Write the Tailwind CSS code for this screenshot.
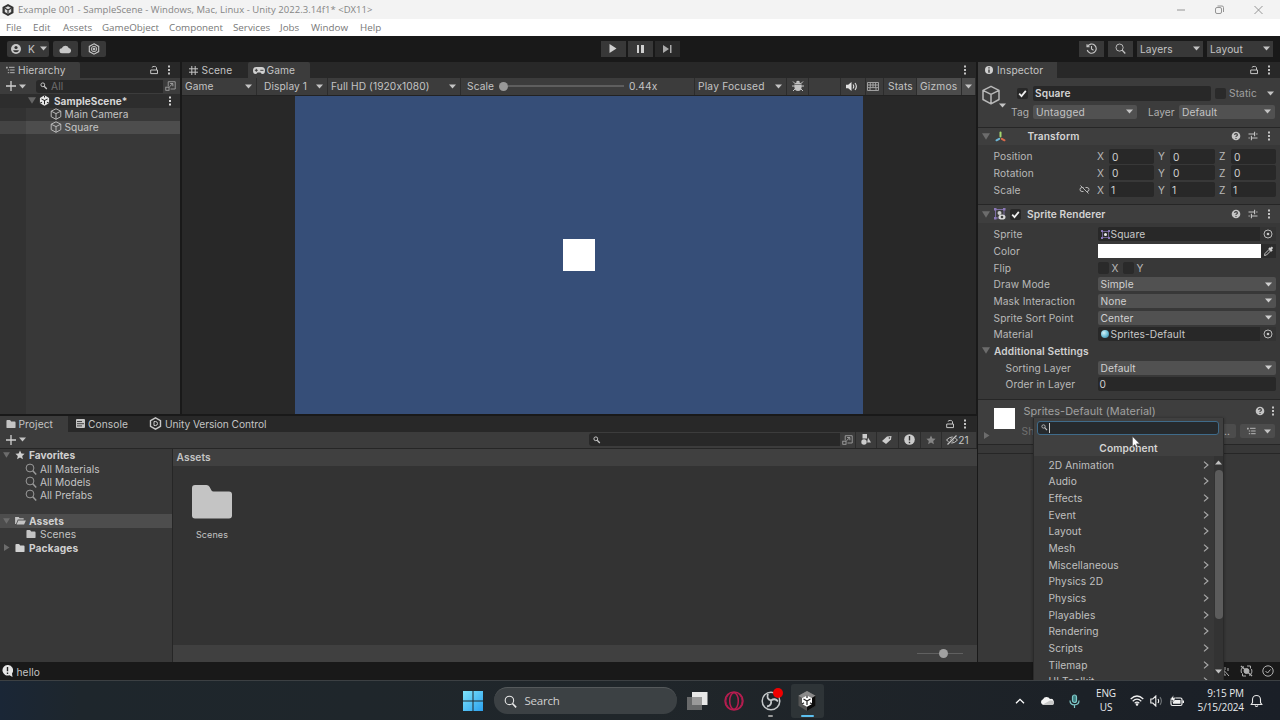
<!DOCTYPE html>
<html lang="en">
<head>
<meta charset="utf-8">
<title>Example 001 - SampleScene - Unity</title>
<script src="https://cdn.jsdelivr.net/npm/@tailwindcss/browser@4"></script>
</head>
<body class="w-[1280px] h-[720px] overflow-hidden bg-[#191919] font-['Inter',sans-serif] text-[10.2px] leading-[14px] tracking-[0.1px] text-[#c4c4c4] whitespace-nowrap select-none">
<svg class="hidden">
  <symbol id="dn" viewBox="0 0 8 5"><path d="M0 .3h8L4 4.9z" fill="currentColor"/></symbol>
  <symbol id="fold" viewBox="0 0 8 7"><path d="M0 .3h8L4 6.800z" fill="currentColor"/></symbol>
  <symbol id="dots" viewBox="0 0 4 12"><g fill="currentColor"><rect x="1" y="1.500" width="2" height="2"/><rect x="1" y="5" width="2" height="2"/><rect x="1" y="8.500" width="2" height="2"/></g></symbol>
  <symbol id="lock" viewBox="0 0 10 10"><path d="M1.700 5h6.800v3.600H1.700zM3 2.600C3 1 7.500 1 7.500 2.800V5" fill="none" stroke="currentColor" stroke-width="1"/></symbol>
  <symbol id="cube" viewBox="0 0 12 12"><path d="M6 .8l4.800 2.400v5.500L6 11.300 1.200 8.700V3.200zM1.200 3.200L6 5.600l4.800-2.400M6 5.600v5.700" fill="none" stroke="currentColor" stroke-width=".9" stroke-linejoin="round"/></symbol>
  <symbol id="mag" viewBox="0 0 12 12"><circle cx="5" cy="5" r="3.900" fill="none" stroke="currentColor"/><path d="M7.800 7.800l3.400 3.600" stroke="currentColor" stroke-width="1.500"/></symbol>
  <symbol id="smag" viewBox="0 0 9 8"><circle cx="2.800" cy="2.800" r="1.900" fill="none" stroke="currentColor"/><path d="M4.200 4.200l2.600 2.800" stroke="currentColor" stroke-width="1.300"/></symbol>
  <symbol id="folder" viewBox="0 0 12 11"><path d="M1 2q0-1 1-1h2.600q.6 0 .9.700l.6 1.100H10q1 0 1 1V9q0 1-1 1H2Q1 10 1 9z" fill="currentColor"/></symbol>
  <symbol id="help" viewBox="0 0 10 10"><circle cx="5" cy="5" r="4.300" fill="currentColor"/><path d="M3.600 4q0-1.400 1.400-1.400T6.400 4q0 .7-.8 1.100T5 6M5 6.900v1" fill="none" stroke="#3c3c3c" stroke-width="1.100"/></symbol>
  <symbol id="preset" viewBox="0 0 10 10"><path d="M.5 3h5.700M8.200 3h1.300M6.600 .8v4.400M.5 7h1.300M3.800 7h5.700M3.400 4.800v4.400" stroke="currentColor" stroke-width="1.100"/></symbol>
  <symbol id="target" viewBox="0 0 10 10"><circle cx="5" cy="5" r="4" fill="none" stroke="currentColor" stroke-width=".9"/><circle cx="5" cy="5" r="1.300" fill="currentColor"/></symbol>
  <symbol id="check" viewBox="0 0 10 10"><path d="M2 5.200l2.100 2.200L8 2.600" fill="none" stroke="#eee" stroke-width="1.600"/></symbol>
  <symbol id="unity" viewBox="0 0 12 12"><path d="M6 .3l5 2.900v5.700l-5 2.800-5-2.800V3.200z" fill="currentColor"/><path d="M6 6.100V10M6 6.100L2.700 4.200M6 6.100l3.300-1.900M6 .5v2.200M1.300 9l2-1.200M10.700 9l-2-1.200" stroke="#222" stroke-width="1.100"/></symbol>
  <symbol id="expand" viewBox="0 0 12 11"><path d="M3.500 6V.8h7.700v8H6" fill="none" stroke="currentColor" stroke-width=".9"/><rect x=".8" y="6.800" width="3.600" height="3.400" fill="none" stroke="currentColor" stroke-width=".9"/><path d="M4.800 6.400l3.400-3.200M5.600 2.800h3v3" fill="none" stroke="currentColor"/></symbol>
  <symbol id="list" viewBox="0 0 10 8"><path d="M0 1h2M3.400 1H9.500M2 4h1.600M4.600 4h5M2 7h1.600M4.600 7h5M1 1.200V2.600" stroke="currentColor" stroke-width="1"/></symbol>
  <symbol id="chev" viewBox="0 0 6 8"><path d="M1 .6l3.900 3.400L1 7.400" fill="none" stroke="currentColor" stroke-width="1.200"/></symbol>
  <symbol id="star" viewBox="0 0 10 10"><path d="M5 .4l1.400 3 3.200.3-2.400 2.200.7 3.300L5 7.500 2.100 9.200l.7-3.300L.4 3.700l3.200-.3z" fill="currentColor"/></symbol>
</svg>

<div class="flex flex-col h-full">
  <!-- title bar -->
  <header class="h-[19px] bg-[#f3f3f3] flex items-center text-[#858585] font-['Open_Sans',sans-serif] text-[9.500px] tracking-[0.04px]">
    <svg class="w-3 h-3 ml-0.5 shrink-0" viewBox="0 0 12 12"><path d="M6 0l5.500 3v6L6 12 .5 9V3z" fill="#333"/><path d="M6 2.200l3.200 1.900v3.800L6 9.800 2.800 7.900V4.100z" fill="#ddd"/><path d="M6 6v3.600M6 6L3 4.300M6 6l3-1.700" stroke="#333" stroke-width="1.200"/></svg>
    <span class="ml-1 flex-1">Example 001 - SampleScene - Windows, Mac, Linux - Unity 2022.3.14f1* &lt;DX11&gt;</span>
    <svg class="w-[90px] h-[10px] mr-[15px] shrink-0" viewBox="0 0 90 10" fill="none" stroke="#8a8a8a" stroke-width=".9"><path d="M2 5h8M79.500 1l8 8M87.500 1l-8 8"/><rect x="40.500" y="2.500" width="6" height="6" rx="1.500"/><path d="M42.500 1h4.500q1.500 0 1.500 1.500V7"/></svg>
  </header>
  <nav class="h-[17px] bg-white flex items-center text-[#777] font-['Open_Sans',sans-serif] text-[9.800px] tracking-[0px] pt-px">
    <span class="ml-1.5 w-[27px]">File</span><span class="w-[30px]">Edit</span><span class="w-[39px]">Assets</span><span class="w-[67px]">GameObject</span><span class="w-16">Component</span><span class="w-[47px]">Services</span><span class="w-[31px]">Jobs</span><span class="w-[49px]">Window</span><span>Help</span>
  </nav>
  <!-- main toolbar -->
  <div class="h-[26px] bg-[#191919] flex items-center pb-px">
    <div class="ml-[7px] w-[42px] h-4 bg-[#383838] rounded-[2px] flex items-center">
      <svg class="w-[10px] h-[10px] ml-1" viewBox="0 0 10 10"><circle cx="5" cy="5" r="5" fill="#c8c8c8"/><circle cx="5" cy="3.500" r="1.600" fill="#333"/><path d="M2 6.300h6q-.6 2-3 2t-3-2" fill="#333"/></svg>
      <span class="ml-[7px]">K</span><svg class="w-[7px] h-[5px] ml-[5px]"><use href="#dn"/></svg>
    </div>
    <div class="ml-1 w-[25px] h-4 bg-[#383838] rounded-[2px] flex items-center justify-center"><svg class="w-[13px] h-[10px]" viewBox="0 0 12 9"><path d="M2.800 8.500a2.300 2.300 0 0 1-.2-4.600A3.400 3.400 0 0 1 9 3.600a2.500 2.500 0 0 1 .3 4.900z" fill="#c8c8c8"/></svg></div>
    <div class="ml-[3px] w-[25px] h-4 bg-[#383838] rounded-[2px] flex items-center justify-center"><svg class="w-[12px] h-[12px]" viewBox="0 0 12 12" fill="none" stroke="#c8c8c8"><path d="M6 .8l4.700 2.600v5.200L6 11.200 1.300 8.600V3.400z" stroke-width="1.100"/><circle cx="6" cy="6" r="2.700" stroke-width=".9"/><circle cx="6" cy="6" r="1" fill="#c8c8c8"/></svg></div>
    <div class="ml-[494.500px] flex gap-0.5">
      <div class="w-[25px] h-4 bg-[#383838] flex items-center justify-center"><svg class="w-2 h-[9px]" viewBox="0 0 8 9"><path d="M.5 0l7 4.500-7 4.500z" fill="#d0d0d0"/></svg></div>
      <div class="w-[25px] h-4 bg-[#383838] flex items-center justify-center gap-0.5"><i class="w-[2.500px] h-2 bg-[#d0d0d0]"></i><i class="w-[2.500px] h-2 bg-[#d0d0d0]"></i></div>
      <div class="w-[25px] h-4 bg-[#2a2a2a] flex items-center justify-center"><svg class="w-[9px] h-2" viewBox="0 0 9 8"><path d="M0 0l6 4-6 4zM7 0h1.500v8H7z" fill="#aaa"/></svg></div>
    </div>
    <div class="ml-auto mr-[7px] flex gap-1 pl-0">
      <div class="w-[25px] h-4 bg-[#383838] flex items-center justify-center"><svg class="w-[11px] h-[11px]" viewBox="0 0 11 11" fill="none" stroke="#c8c8c8" stroke-width="1.100"><path d="M1.500 3.600A4.600 4.600 0 1 1 1.200 7M1 1.200v2.600h2.600M5.500 3v3l2 1.200"/></svg></div>
      <div class="w-[25px] h-4 bg-[#383838] flex items-center justify-center"><svg class="w-[11px] h-[11px]"><use href="#mag"/></svg></div>
      <div class="w-[66px] h-4 bg-[#383838] flex items-center justify-between pl-[3px] pr-[3px]"><span>Layers</span><svg class="w-[7px] h-[5px]"><use href="#dn"/></svg></div>
      <div class="w-[66px] h-4 bg-[#383838] flex items-center justify-between pl-[3px] pr-[3px]"><span>Layout</span><svg class="w-[7px] h-[5px]"><use href="#dn"/></svg></div>
    </div>
  </div>

  <div class="flex h-[600px]">
    <div class="w-[977px] flex flex-col">
      <div class="flex h-[352px]">
        <!-- hierarchy -->
        <section class="w-[180px] bg-[#383838] flex flex-col">
          <div class="h-4 bg-[#282828] flex items-center">
            <div class="w-20 h-full bg-[#3c3c3c] flex items-center rounded-tr-[2px]"><svg class="ml-1.5 w-[9px] h-[8px]"><use href="#list"/></svg><span class="ml-[3px]">Hierarchy</span></div>
            <svg class="w-[10px] h-[10px] ml-[69px]"><use href="#lock"/></svg><svg class="w-1 h-3 ml-2"><use href="#dots"/></svg>
          </div>
          <div class="h-4 bg-[#3c3c3c] flex items-center">
            <svg class="ml-1.5 w-[10px] h-[10px] shrink-0" viewBox="0 0 10 10"><path d="M5 0v10M0 5h10" stroke="#d0d0d0" stroke-width="1.300"/></svg><svg class="ml-[3px] w-[7px] h-[5px] shrink-0"><use href="#dn"/></svg>
            <div class="ml-[10px] w-[127px] h-[13px] shrink-0 bg-[#282828] rounded-l-[3px] flex items-center"><svg class="ml-1 w-[9px] h-2"><use href="#smag"/></svg><span class="ml-0.5 text-[#6e6e6e]">All</span></div>
            <svg class="ml-[2px] w-[11px] h-[10px] text-[#aaa] shrink-0"><use href="#expand"/></svg>
          </div>
          <div class="h-[13.500px] bg-[#2d2d2d] flex items-center font-bold text-[#d6d6d6]">
            <svg class="ml-7 w-2 h-[7px] text-[#666]"><use href="#fold"/></svg><svg class="ml-[3px] w-[11px] h-[11px] text-[#e8e8e8]"><use href="#unity"/></svg><span class="ml-1 w-[114px] text-[10px] tracking-[0.06px]">SampleScene*</span><svg class="w-1 h-3"><use href="#dots"/></svg>
          </div>
          <div class="flex-1 flex flex-col bg-[linear-gradient(to_right,#323232_26px,#383838_26px)]">
            <div class="h-[13.200px] flex items-center"><svg class="ml-[50px] w-3 h-3"><use href="#cube"/></svg><span class="ml-[2.500px] tracking-[0px]">Main Camera</span></div>
            <div class="h-[13.500px] flex items-center bg-[linear-gradient(to_right,#444_26px,#4d4d4d_26px)]"><svg class="ml-[50px] w-3 h-3"><use href="#cube"/></svg><span class="ml-[2.500px] tracking-[0px]">Square</span></div>
          </div>
        </section>
        <!-- game view -->
        <section class="ml-0.5 w-[794px] bg-[#282828] flex flex-col">
          <div class="h-4 flex items-center">
            <svg class="ml-[7px] w-[9px] h-[9px]" viewBox="0 0 9 9"><path d="M2.800 0v9M6.200 0v9M0 2.800h9M0 6.200h9" stroke="#c4c4c4"/></svg><span class="ml-[3.500px] w-[46px]">Scene</span>
            <div class="w-[62px] h-full bg-[#3c3c3c] flex items-center rounded-t-[2px]"><svg class="ml-[5px] w-3 h-[7px]" viewBox="0 0 12 7"><path d="M3.300 0h5.400Q12 0 12 3.500T9.500 7Q8.500 7 7.500 5.500h-3Q3.500 7 2.500 7 0 7 0 3.500T3.300 0" fill="#d0d0d0"/><path d="M3.300 1.800v3M1.800 3.300h3M7.300 3.300h3.200" stroke="#3c3c3c"/></svg><span class="ml-0.5">Game</span></div>
            <svg class="w-1 h-3 ml-auto mr-[9px]"><use href="#dots"/></svg>
          </div>
          <div class="h-[17.500px] bg-[#3c3c3c] border-b border-[#222] flex items-center *:h-full *:flex *:items-center *:border-r *:border-[#2c2c2c]">
            <div class="w-[75px] pl-[3px] justify-between pr-1"><span>Game</span><svg class="w-[7px] h-[5px]"><use href="#dn"/></svg></div>
            <div class="w-[71px] pl-[7px] justify-between pr-1"><span>Display 1</span><svg class="w-[7px] h-[5px]"><use href="#dn"/></svg></div>
            <div class="w-[133px] pl-[3px] justify-between pr-1"><span>Full HD (1920x1080)</span><svg class="w-[7px] h-[5px]"><use href="#dn"/></svg></div>
            <div class="w-[234px] pl-1.5"><span class="w-[30px]">Scale</span><i class="ml-0.5 w-[9px] h-[9px] rounded-full bg-[#999]"></i><i class="w-[116px] h-0.5 bg-[#5e5e5e]"></i><span class="ml-[5px]">0.44x</span></div>
            <div class="w-[92px] pl-[3px] justify-between pr-1"><span class="tracking-[0.2px]">Play Focused</span><svg class="w-[7px] h-[5px]"><use href="#dn"/></svg></div>
            <div class="w-[22px] justify-center"><svg class="w-[12px] h-[12px]" viewBox="0 0 12 12"><path d="M1 1.500l3 3M11 1.500l-3 3M0 6h12M1 11l3-3M11 11L8 8" stroke="#c4c4c4"/><ellipse cx="6" cy="6.500" rx="3.600" ry="4.500" fill="#c4c4c4"/><path d="M3 4.500h6" stroke="#555" stroke-width=".7"/><path d="M4 2q2-2.500 4 0" fill="#c4c4c4"/></svg></div>
            <div class="w-8"></div>
            <div class="w-[25px] pl-[5px]"><svg class="w-3 h-[9px]" viewBox="0 0 12 9"><path d="M0 2.700h2.200L5.500 0v9L2.200 6.300H0z" fill="#e0e0e0"/><path d="M7 2.500q1.500 2 0 4M9 1q2.700 3.500 0 7" fill="none" stroke="#e0e0e0" stroke-width="1.100"/></svg></div>
            <div class="w-[18px] pr-1 justify-center"><svg class="w-3 h-[9px] shrink-0" viewBox="0 0 12 9"><path d="M.5.5h11v8H.5zM1 3h10M1 5.600h10M3.300 1v4.500M6 1v4.500M8.600 1v4.500M3 6v2.500M9 6v2.500" fill="none" stroke="#aaa" stroke-width=".9"/></svg></div>
            <div class="w-[33px] pl-1"><span>Stats</span></div>
            <div class="w-[45px] pl-[3px] bg-[#4c4c4c]"><span class="tracking-[0.2px]">Gizmos</span></div>
            <div class="flex-1 bg-[#4c4c4c] justify-center"><svg class="w-[7px] h-[5px]"><use href="#dn"/></svg></div>
          </div>
          <div class="flex-1 flex pl-[113px]"><div class="w-[568px] h-full bg-[#364e78] flex items-center justify-center"><div class="w-8 h-8 bg-white"></div></div></div>
        </section>
      </div>
      <!-- project -->
      <section class="mt-[1.500px] flex-1 flex flex-col bg-[#333]">
        <div class="h-4 bg-[#282828] flex items-center">
          <div class="w-[68px] h-full bg-[#3c3c3c] flex items-center"><svg class="ml-[5px] w-3 h-[10px]"><use href="#folder"/></svg><span class="ml-[1.500px]">Project</span></div>
          <svg class="ml-2 w-[9px] h-[9px]" viewBox="0 0 9 9"><rect width="9" height="9" rx="1" fill="#c4c4c4"/><path d="M1 2.500h5M1 4.700h7M1 6.900h5" stroke="#333" stroke-width=".9"/></svg><span class="ml-[3px] w-[61px]">Console</span>
          <svg class="w-[13px] h-[13px]" viewBox="0 0 13 13" fill="none" stroke="#c8c8c8"><path d="M6.500.8l5 2.900v5.600l-5 2.900-5-2.900V3.700z" stroke-width="1.400"/><path d="M5 4.500h1.500q2 0 2 2t-2 2H5z"/></svg><span class="ml-[3px] tracking-[-0.050px]">Unity Version Control</span>
          <svg class="ml-auto w-[10px] h-[10px]"><use href="#lock"/></svg><svg class="w-1 h-3 ml-2 mr-[10px]"><use href="#dots"/></svg>
        </div>
        <div class="h-[17px] bg-[#3c3c3c] border-b border-[#262626] flex items-center">
          <svg class="ml-1.5 w-[10px] h-[10px]" viewBox="0 0 10 10"><path d="M5 0v10M0 5h10" stroke="#d0d0d0" stroke-width="1.300"/></svg><svg class="ml-[3px] w-[7px] h-[5px]"><use href="#dn"/></svg>
          <div class="ml-auto w-[251px] h-[13px] bg-[#282828] rounded-l-[3px] flex items-center"><svg class="ml-1 w-[9px] h-2"><use href="#smag"/></svg></div>
          <div class="flex h-full w-[137px] items-center *:h-full *:flex *:items-center *:justify-center *:border-r *:border-[#2c2c2c]">
            <div class="w-4"><svg class="w-[11px] h-[10px] text-[#aaa]"><use href="#expand"/></svg></div>
            <div class="w-[21px]"><svg class="w-[10px] h-[11px]" viewBox="0 0 10 11"><rect x="1.500" width="4.500" height="4.500" fill="#ccc"/><circle cx="3" cy="8" r="2.700" fill="#ccc"/><path d="M7 3.500l3 5H6.200z" fill="#ccc"/></svg></div>
            <div class="w-[22px]"><svg class="w-[10px] h-2" viewBox="0 0 10 8"><path d="M0 5l5-4.500L9.500 0 9 3.500 4 8z" fill="#ccc"/><circle cx="7.400" cy="2" r=".8" fill="#333"/></svg></div>
            <div class="w-[22px]"><svg class="w-[11px] h-[11px]" viewBox="0 0 11 11"><circle cx="5.500" cy="5.500" r="5.300" fill="#ccc"/><path d="M5.500 2v4.500M5.500 7.700v1.500" stroke="#333" stroke-width="1.400"/></svg></div>
            <div class="w-[21px]"><svg class="w-[10px] h-[10px] text-[#858585]"><use href="#star"/></svg></div>
            <div class="flex-1 pr-0.5"><svg class="w-[12px] h-[10px]" viewBox="0 0 12 10" fill="none" stroke="#c4c4c4"><path d="M.5 5q5.500-6 11 0-5.500 6-11 0z"/><circle cx="6" cy="5" r="1.500"/><path d="M1.500 9.500L10.500 .5" stroke="#3c3c3c" stroke-width="2.600"/><path d="M1.500 9.500L10.500 .5" stroke-width="1.200"/></svg><span class="tracking-[0px]">21</span></div>
          </div>
        </div>
        <div class="flex-1 flex">
          <div class="w-[173px] border-r border-[#262626] bg-[#383838] flex flex-col *:h-[13.350px] *:flex *:items-center *:shrink-0">
            <div class="font-bold text-[#d0d0d0]"><svg class="ml-[3px] w-[7px] h-[6px] text-[#6c6c6c]"><use href="#fold"/></svg><svg class="ml-[5px] w-[10px] h-[10px]"><use href="#star"/></svg><span class="ml-1 tracking-[0px]">Favorites</span></div>
            <div><svg class="ml-[25px] w-3 h-3 text-[#9a9a9a]"><use href="#mag"/></svg><span class="ml-[3px] tracking-[0.050px]">All Materials</span></div>
            <div><svg class="ml-[25px] w-3 h-3 text-[#9a9a9a]"><use href="#mag"/></svg><span class="ml-[3px] tracking-[0.050px]">All Models</span></div>
            <div><svg class="ml-[25px] w-3 h-3 text-[#9a9a9a]"><use href="#mag"/></svg><span class="ml-[3px] tracking-[0.050px]">All Prefabs</span></div>
            <div class="mt-[12.300px] bg-[#4d4d4d] font-bold text-[#d0d0d0]"><svg class="ml-[3px] w-[7px] h-[6px] text-[#6c6c6c]"><use href="#fold"/></svg><svg class="ml-[5px] w-[11px] h-[9px]" viewBox="0 0 12 10"><path d="M0 1h4l1 1.500h4.500V4H3L1 9H0z M3.500 5H12l-2 4.500H1.700z" fill="#c4c4c4"/></svg><span class="ml-[3px]">Assets</span></div>
            <div><svg class="ml-[25px] w-3 h-[10px]"><use href="#folder"/></svg><span class="ml-[3px]">Scenes</span></div>
            <div class="font-bold text-[#d0d0d0]"><svg class="ml-[3px] w-[7px] h-[7px]" viewBox="0 0 7 7"><path d="M1 0l5.500 3.500L1 7z" fill="#6c6c6c"/></svg><svg class="ml-1 w-3 h-[10px]"><use href="#folder"/></svg><span class="ml-[3px]">Packages</span></div>
          </div>
          <div class="flex-1 flex flex-col">
            <div class="h-[17px] bg-[#404040] flex items-center pl-[3.500px] font-semibold">Assets</div>
            <div class="flex-1 pt-[18px] pl-[19px]"><div class="w-10 flex flex-col items-center"><svg class="w-10 h-[36px]" viewBox="0 0 40 36"><path d="M0 4q0-3 3-3h11.500q2 0 3 1.800l2 3.700q.6 1 2 1H37q3 0 3 3v21q0 3-3 3H3q-3 0-3-3z" fill="#c4c4c4"/></svg><span class="mt-2 text-[9px] tracking-[0.1px]">Scenes</span></div></div>
            <div class="h-[17px] bg-[#404040] flex items-center justify-end pr-[14px]"><i class="w-[22px] h-px bg-[#606060]"></i><i class="w-[9px] h-[9px] rounded-full bg-[#a0a0a0]"></i><i class="w-[15px] h-px bg-[#606060]"></i></div>
          </div>
        </div>
      </section>
    </div>

    <!-- inspector -->
    <aside class="ml-[1.500px] flex-1 bg-[#383838] flex flex-col">
      <div class="h-[15.500px] bg-[#282828] flex items-center shrink-0">
        <div class="w-[79px] h-full bg-[#3c3c3c] flex items-center"><svg class="ml-[7px] w-2 h-2" viewBox="0 0 8 8"><circle cx="4" cy="4" r="4" fill="#d0d0d0"/><path d="M4 1.300v1.200M4 3.500v3.200" stroke="#333" stroke-width="1.300"/></svg><span class="ml-1">Inspector</span></div>
        <svg class="ml-auto w-[10px] h-[10px]"><use href="#lock"/></svg><svg class="ml-2 mr-[9px] w-1 h-3"><use href="#dots"/></svg>
      </div>
      <div class="h-[49px] bg-[#3c3c3c] flex shrink-0">
        <div class="w-[33px] pl-[3px] flex items-end pb-[22px]"><svg class="w-5 h-5 shrink-0 text-[#b8b8b8]"><use href="#cube"/></svg><svg class="-ml-0.5 -mb-[3px] w-[7px] h-[5px] shrink-0"><use href="#dn"/></svg></div>
        <div class="flex-1">
          <div class="mt-[7px] h-[17px] flex items-center">
            <div class="ml-1.5 w-[11px] h-[11px] bg-[#282828] rounded-[2px]"><svg class="w-[11px] h-[11px]"><use href="#check"/></svg></div>
            <div class="ml-[5px] w-[178px] h-[15px] bg-[#282828] rounded-[2px] flex items-center pl-0.5 font-semibold text-[#d4d4d4]">Square</div>
            <i class="ml-1 w-[11px] h-[11px] bg-[#2a2a2a] rounded-[2px]"></i><span class="ml-[3px] w-[38px] text-[#a0a0a0]">Static</span><svg class="w-[7px] h-[5px]"><use href="#dn"/></svg>
          </div>
          <div class="mt-[2.500px] h-[15px] flex items-center"><span class="w-[22px] text-[#b0b0b0]">Tag</span>
            <div class="w-[104px] h-[14px] bg-[#515151] rounded-[2px] flex items-center justify-between pl-[3px] pr-1"><span class="tracking-[0.2px]">Untagged</span><svg class="w-[7px] h-[5px]"><use href="#dn"/></svg></div>
            <span class="ml-[11px] w-[31px] text-[#b0b0b0] tracking-[0px]">Layer</span>
            <div class="w-[96px] h-[14px] bg-[#515151] rounded-[2px] flex items-center justify-between pl-[3px] pr-1"><span>Default</span><svg class="w-[7px] h-[5px]"><use href="#dn"/></svg></div>
          </div>
        </div>
      </div>
      <div class="h-[18px] bg-[#3e3e3e] border-t border-[#262626] flex items-center shrink-0">
        <svg class="ml-1 w-2 h-[7px] text-[#6c6c6c]"><use href="#fold"/></svg>
        <svg class="ml-[5px] w-[11px] h-[11px]" viewBox="0 0 11 11" stroke-width="2" stroke-linecap="round"><path d="M5.500 1.500v4" stroke="#a5d86e"/><path d="M4.200 7.800L1.500 9.300" stroke="#6db6d6"/><path d="M6.800 7.800l2.700 1.500" stroke="#d96a4c"/></svg>
        <span class="ml-[21.500px] font-semibold text-[#d4d4d4]">Transform</span>
        <svg class="ml-auto w-[10px] h-[10px]"><use href="#help"/></svg><svg class="ml-[7px] w-[10px] h-[10px]"><use href="#preset"/></svg><svg class="ml-[9px] mr-[9px] w-1 h-3"><use href="#dots"/></svg>
      </div>
      <div class="pt-[3.500px] pb-[6.500px] pl-[15.500px] pr-1 shrink-0 text-[#b8b8b8]">
        <div class="h-[16.670px] flex items-center"><span class="w-[103.500px]">Position</span><span class="w-[12px]">X</span><div class="w-[45px] h-[15px] bg-[#282828] rounded-[2px] pl-[3px] pt-px text-[#d0d0d0]">0</div><span class="ml-1 w-3">Y</span><div class="w-[45px] h-[15px] bg-[#282828] rounded-[2px] pl-[3px] pt-px text-[#d0d0d0]">0</div><span class="ml-1 w-3">Z</span><div class="w-[45px] h-[15px] bg-[#282828] rounded-[2px] pl-[3px] pt-px text-[#d0d0d0]">0</div></div>
        <div class="h-[16.670px] flex items-center"><span class="w-[103.500px]">Rotation</span><span class="w-[12px]">X</span><div class="w-[45px] h-[15px] bg-[#282828] rounded-[2px] pl-[3px] pt-px text-[#d0d0d0]">0</div><span class="ml-1 w-3">Y</span><div class="w-[45px] h-[15px] bg-[#282828] rounded-[2px] pl-[3px] pt-px text-[#d0d0d0]">0</div><span class="ml-1 w-3">Z</span><div class="w-[45px] h-[15px] bg-[#282828] rounded-[2px] pl-[3px] pt-px text-[#d0d0d0]">0</div></div>
        <div class="h-[16.670px] flex items-center"><span class="w-[85.500px]">Scale</span><svg class="w-[11px] h-[9px] mr-[7px]" viewBox="0 0 10 9" fill="none" stroke="#b8b8b8"><path d="M1 .5l8 8M4 2.500H2.500q-2 0-2 2t2 2H4M6 2.500h1.500q2 0 2 2t-2 2"/></svg><span class="w-[12px]">X</span><div class="w-[45px] h-[15px] bg-[#282828] rounded-[2px] pl-0.5 pt-px text-[#d0d0d0]">1</div><span class="ml-1 w-3">Y</span><div class="w-[45px] h-[15px] bg-[#282828] rounded-[2px] pl-0.5 pt-px text-[#d0d0d0]">1</div><span class="ml-1 w-3">Z</span><div class="w-[45px] h-[15px] bg-[#282828] rounded-[2px] pl-0.5 pt-px text-[#d0d0d0]">1</div></div>
      </div>
      <div class="h-[18.500px] bg-[#3e3e3e] border-t border-[#262626] flex items-center shrink-0">
        <svg class="ml-1 w-2 h-[7px] text-[#6c6c6c]"><use href="#fold"/></svg>
        <svg class="ml-[4px] w-3 h-3" viewBox="0 0 12 12"><rect x="1.500" y="1.500" width="8.500" height="8.500" fill="none" stroke="#8b78b8" stroke-width=".8"/><path d="M0 0h2.500v2.500H0zM9 0h2.500v2.500H9zM0 9h2.500v2.500H0z" fill="#8b78b8"/><circle cx="5.500" cy="5" r="2" fill="#ccc"/><ellipse cx="8" cy="9" rx="3.500" ry="2.600" fill="#ddd"/><circle cx="8" cy="9" r="1.300" fill="#444"/></svg>
        <div class="ml-1 w-[11px] h-[11px] bg-[#282828] rounded-[2px]"><svg class="w-[11px] h-[11px]"><use href="#check"/></svg></div>
        <span class="ml-1.5 font-semibold text-[#d4d4d4]">Sprite Renderer</span>
        <svg class="ml-auto w-[10px] h-[10px]"><use href="#help"/></svg><svg class="ml-[7px] w-[10px] h-[10px]"><use href="#preset"/></svg><svg class="ml-[9px] mr-[9px] w-1 h-3"><use href="#dots"/></svg>
      </div>
      <div class="pt-[3px] pl-[15.500px] pr-1 shrink-0 h-[176.500px] text-[#b8b8b8] *:h-[16.670px] *:flex *:items-center">
        <div><span class="w-[104px]">Sprite</span><div class="w-[178px] h-[14px] bg-[#282828] rounded-[2px] flex items-center pl-[3px] text-[#c8c8c8]"><svg class="w-[9px] h-[9px]" viewBox="0 0 9 9"><path d="M1.500 1.500h6v6h-6z" fill="none" stroke="#8b78b8" stroke-width=".7"/><path d="M0 0h2v2H0zM7 0h2v2H7zM0 7h2v2H0zM7 7h2v2H7z" fill="#8b78b8"/><circle cx="4.500" cy="4.500" r="1.500" fill="#eee"/></svg><span class="ml-px">Square</span><div class="ml-auto w-4 h-full bg-[#333] flex items-center justify-center"><svg class="w-[10px] h-[10px]"><use href="#target"/></svg></div></div></div>
        <div><span class="w-[104px]">Color</span><div class="w-[178px] h-[14px] bg-[#2c2c2c] flex"><i class="w-[163px] h-full bg-white"></i><svg class="ml-[3px] mt-0.5 w-[10px] h-[10px]" viewBox="0 0 10 10"><path d="M.5 9.500L1 7.500l4-4 1.500 1.500-4 4z" fill="none" stroke="#c4c4c4"/><path d="M5 2l3 3M6 3.500L8.500 1.200" stroke="#d0d0d0" stroke-width="2"/></svg></div></div>
        <div><span class="w-[104px]">Flip</span><i class="w-[11px] h-[12px] bg-[#2a2a2a] rounded-[2px]"></i><span class="ml-[3px] w-[11px]">X</span><i class="w-[11px] h-[12px] bg-[#2a2a2a] rounded-[2px]"></i><span class="ml-[3px]">Y</span></div>
        <div><span class="w-[104px]">Draw Mode</span><div class="w-[178px] h-[14px] bg-[#515151] rounded-[2px] flex items-center justify-between pl-[3px] pr-1 text-[#d0d0d0]"><span>Simple</span><svg class="w-[7px] h-[5px]"><use href="#dn"/></svg></div></div>
        <div><span class="w-[104px]">Mask Interaction</span><div class="w-[178px] h-[14px] bg-[#515151] rounded-[2px] flex items-center justify-between pl-[3px] pr-1 text-[#d0d0d0]"><span>None</span><svg class="w-[7px] h-[5px]"><use href="#dn"/></svg></div></div>
        <div><span class="w-[104px]">Sprite Sort Point</span><div class="w-[178px] h-[14px] bg-[#515151] rounded-[2px] flex items-center justify-between pl-[3px] pr-1 text-[#d0d0d0]"><span>Center</span><svg class="w-[7px] h-[5px]"><use href="#dn"/></svg></div></div>
        <div><span class="w-[104px]">Material</span><div class="w-[178px] h-[14px] bg-[#282828] rounded-[2px] flex items-center pl-[3px] text-[#c8c8c8]"><i class="w-2 h-2 rounded-full bg-[radial-gradient(circle_at_35%_35%,#d5f4fa,#6fc0d8_50%,#2b6d86)]"></i><span class="ml-0.5">Sprites-Default</span><div class="ml-auto w-4 h-full bg-[#333] flex items-center justify-center"><svg class="w-[10px] h-[10px]"><use href="#target"/></svg></div></div></div>
        <div class="font-semibold text-[#d0d0d0]"><svg class="-ml-[11.500px] w-2 h-[7px] text-[#6c6c6c]"><use href="#fold"/></svg><span class="ml-1">Additional Settings</span></div>
        <div><span class="w-[104px] pl-3">Sorting Layer</span><div class="w-[178px] h-[14px] bg-[#515151] rounded-[2px] flex items-center justify-between pl-[3px] pr-1 text-[#d0d0d0]"><span>Default</span><svg class="w-[7px] h-[5px]"><use href="#dn"/></svg></div></div>
        <div><span class="w-[104px] pl-3">Order in Layer</span><div class="w-[178px] h-[14px] bg-[#282828] rounded-[2px] pl-0.5 text-[#d0d0d0]">0</div></div>
      </div>
      <div class="relative h-[46px] bg-[#3e3e3e] border-y border-[#262626] shrink-0 flex">
        <svg class="ml-[5px] mt-[32px] w-[7px] h-[7px]" viewBox="0 0 7 7"><path d="M1 0l5.500 3.500L1 7z" fill="#6c6c6c"/></svg>
        <div class="ml-[3.500px] mt-2 w-[21px] h-[21px] bg-white"></div>
        <div class="flex-1 flex flex-col pt-1">
          <div class="h-[14px] flex items-center pl-[9px]"><span class="text-[#a0a0a0] text-[10.900px] tracking-[0.07px]">Sprites-Default (Material)</span><svg class="ml-auto w-[10px] h-[10px]"><use href="#help"/></svg><svg class="ml-[6px] mr-[5px] w-1 h-3"><use href="#dots"/></svg></div>
          <div class="mt-1.5 h-[14px] flex items-center pl-[7px] pr-[5px]"><span class="text-[#707070]">Shader</span><div class="ml-auto w-7 h-[14px] bg-[#4c4c4c] rounded-[2px] text-right pr-1.5">...</div><div class="ml-1 w-[35px] h-[14px] bg-[#4c4c4c] rounded-[2px] flex items-center pl-[7px]"><svg class="w-[9px] h-[8px]"><use href="#list"/></svg><svg class="ml-2 w-[7px] h-[5px]"><use href="#dn"/></svg></div></div>
        </div>
        <!-- add-component popup -->
        <div class="absolute z-10 left-[55px] top-[17.500px] w-[191px] h-[262.500px] bg-[#383838] border-x border-[#2a2a2a] shadow-[0_0_3px_#0005] overflow-hidden text-[#c0c0c0]">
          <div class="h-[38.500px] bg-[#404040] px-[3px] pt-[3px]">
            <div class="w-[182px] h-[14px] border border-[#3f6b8a] rounded-[3px] bg-[#262a2d] flex items-center"><svg class="ml-[3px] w-[8px] h-[7px]"><use href="#smag"/></svg><i class="w-px h-[10px] bg-[#ccc]"></i></div>
            <div class="mt-1.5 text-center font-semibold text-[#d4d4d4] tracking-[0.1px]">Component</div>
          </div>
          <div class="flex">
            <div class="w-[181px] pl-[14.500px] pr-[5px]" id="menu"></div>
            <div class="w-[9px] h-[224px] bg-[#333] flex flex-col items-center justify-start"><svg class="mt-[4px] w-[7px] h-[5px] rotate-180 shrink-0"><use href="#dn"/></svg><i class="mt-[5px] w-2 h-[149px] rounded-full bg-[#5c5c5c] shrink-0"></i><svg class="mt-auto mb-[6px] w-[7px] h-[5px] shrink-0"><use href="#dn"/></svg></div>
          </div>
        </div>
        <!-- mouse pointer -->
        <svg class="absolute z-20 left-[154px] top-[36px] w-[9px] h-3" viewBox="0 0 9 12"><path d="M.5.500v10l2.300-2 1.500 3 1.500-.7-1.400-3h3.200z" fill="#fff" stroke="#444" stroke-width=".4"/></svg>
      </div>
      <div class="h-[9px] bg-[#383838] border-b border-[#262626] shrink-0"></div>
    </aside>
  </div>

  <!-- status bar -->
  <div class="h-[18px] bg-[#191919] flex items-center shrink-0">
    <svg class="ml-0.5 w-[11px] h-3" viewBox="0 0 11 12"><path d="M5.500 0a5.300 5.300 0 1 0 2 10.300L10.500 12 10 8.500A5.300 5.300 0 0 0 5.500 0" fill="#e4e4e4"/><path d="M5.500 2v4.300M5.500 7.500V9" stroke="#222" stroke-width="1.400"/></svg><span class="ml-[3.500px] pt-px">hello</span>
    <svg class="ml-auto w-[60px] h-3 mr-1.5" viewBox="0 0 60 12" fill="none" stroke="#b0b0b0"><path d="M6 1l9 10M11 2v3M14 3v3M8 10h4M10 6v4"/><circle cx="32.500" cy="6" r="2.500" fill="#b0b0b0"/><path d="M27 1l11 10" stroke-width="1.300"/><path d="M27.500 8q-1.500-4.500 2.500-6.500M37.500 4q1.500 4.500-2.500 6.500M33 1h3.500v2.500M32 11h-3.500V8.500"/><circle cx="54" cy="6" r="5.200"/><path d="M51.500 6l2 2 3-3.500"/></svg>
  </div>

  <!-- taskbar -->
  <footer class="relative z-30 h-10 border-t border-[#3c4043] bg-[linear-gradient(to_right,#1a2636,#1e262c_80px,#20262a_50%,#1c2127_85%,#1a1f27)] flex items-center shrink-0">
    <svg class="ml-[463px] w-5 h-5 shrink-0" viewBox="0 0 20 20"><defs><linearGradient id="w" x1="0" y1="0" x2="20" y2="20" gradientUnits="userSpaceOnUse"><stop stop-color="#7fe4fb"/><stop offset="1" stop-color="#2aa0ee"/></linearGradient></defs><path d="M0 0h9.500v9.500H0zM10.500 0H20v9.500h-9.500zM0 10.500h9.500V20H0zM10.500 10.500H20V20h-9.500z" fill="url(#w)"/></svg>
    <div class="ml-[11px] w-[183px] h-[27px] rounded-full bg-[#3c4144] border-t border-[#55595b] flex items-center shrink-0 text-[#d0d0d0] font-['Open_Sans',sans-serif] text-[11.500px] tracking-[-0.200px]"><svg class="ml-[10px] w-[13px] h-[13px] text-[#e8e8e8]"><use href="#mag"/></svg><span class="ml-[7.500px] pb-px">Search</span></div>
    <svg class="ml-[10px] w-[21px] h-5 shrink-0" viewBox="0 0 21 20"><rect x="5" y="1" width="15.500" height="13" fill="#e8e8e8"/><rect x="0" y="6" width="15" height="13" fill="#808080" fill-opacity=".75"/></svg>
    <svg class="ml-4 w-5 h-5 shrink-0" viewBox="0 0 20 20" fill="none" stroke="#b81d50" stroke-width="1.500"><circle cx="10" cy="10" r="9"/><ellipse cx="10" cy="10" rx="4.300" ry="8.200"/><path d="M5 3Q-1 10 5 17M15 3q6 7 0 14" stroke-width=".8"/></svg>
    <div class="relative ml-[17px] w-5 h-10 shrink-0 flex items-center"><svg class="w-5 h-5" viewBox="0 0 20 20" fill="none" stroke="#c4c8ca" stroke-width="1.500"><circle cx="10" cy="10" r="8.800"/><path d="M10 9.500Q5 8 7 3M10 9.500q4-3 7 1M10 9.500q1 5-4 6" stroke-width="1.800"/></svg><i class="absolute -right-[2px] top-[7px] w-[10px] h-[10px] rounded-full bg-[#f00000]"></i><i class="absolute left-[7px] bottom-[4px] w-[5px] h-0.5 rounded bg-[#999]"></i></div>
    <div class="ml-[9.500px] w-[33px] h-[34px] rounded-[3px] bg-[#2e3437] flex flex-col items-center shrink-0"><svg class="mt-[7px] w-[18px] h-5 shrink-0" viewBox="0 0 18 20"><path d="M9 0l8.500 4.700v10L9 20 .5 14.700v-10z" fill="#555"/><path d="M9 0l8.500 4.700L9 10 .5 4.700z" fill="#8a8a8a"/><path d="M9 10l8.500-5.300v10L9 20z" fill="#0c0c0c"/><path d="M9 4.500l5 2.800v5.600l-5 2.800-5-2.800V7.300z" fill="#fff"/><path d="M9 10v4M9 10L5.500 8M9 10l3.500-2M9 4.500v2.500M4 13l2-1.200M14 13l-2-1.200" stroke="#222" stroke-width="1.200"/></svg><i class="mt-1 w-[13px] h-[2.500px] rounded bg-[#5cc0f0] shrink-0"></i></div>
    <div class="ml-auto flex items-center text-[#e8eaec] font-['Open_Sans',sans-serif] text-[10px] leading-[13.500px] tracking-[-0.1px]">
      <svg class="w-[10px] h-[6px]" viewBox="0 0 10 6"><path d="M1 5.200L5 1.300l4 3.900" fill="none" stroke="#fff" stroke-width="1.300"/></svg>
      <svg class="ml-[15px] w-[15px] h-[10px]" viewBox="0 0 15 10"><path d="M3.500 9A3 3 0 0 1 3 3.200 4 4 0 0 1 10 3a3 3 0 0 1 1.500 6z" fill="#f4f4f4"/><path d="M2 9l8-4.500q4-.5 4 2.300T11.500 9z" fill="#c8c8c8"/></svg>
      <svg class="ml-[14px] w-[11px] h-[14px]" viewBox="0 0 11 14" fill="none" stroke="#7fc8c8" stroke-width="1.200"><rect x="3.500" y="1" width="4" height="7.500" rx="2" fill="#3d7f80"/><path d="M1 6.500q0 4.300 4.500 4.300T10 6.500M5.500 11v3"/></svg>
      <div class="ml-[14px] w-6 text-center">ENG<br>US</div>
      <svg class="ml-[12px] w-[14px] h-[11px]" viewBox="0 0 14 11" fill="none" stroke="#f0f0f0" stroke-width="1.200"><path d="M.7 4q6.300-6 12.600 0M2.700 6.200q4.300-4 8.600 0M4.700 8.200q2.300-2 4.600 0"/><circle cx="7" cy="9.500" r=".7" fill="#fff"/></svg>
      <svg class="ml-[6px] w-[13px] h-[12px]" viewBox="0 0 13 12" fill="none" stroke="#f0f0f0" stroke-width="1.100"><path d="M.8 4h2l3-3v10l-3-3h-2zM8 4q1.300 2 0 4"/><path d="M10 2.200q2.800 3.800 0 7.600" stroke="#6f7477"/></svg>
      <svg class="ml-[7px] w-[14px] h-[12px]" viewBox="0 0 14 12"><rect x="1" y="3" width="11" height="7.500" rx="1.500" fill="none" stroke="#f0f0f0" stroke-width="1.200"/><path d="M3 5h7.500v3.700H3zM12.500 5.500H14v2.500h-1.500z" fill="#f0f0f0"/><path d="M3.500 0L0 5h2.500L2 8l4-5H3.500z" fill="#fff" stroke="#1c2127" stroke-width=".5"/></svg>
      <div class="ml-[11px] w-[49px] flex flex-col items-end"><span>9:15 PM</span><span>5/15/2024</span></div>
      <svg class="ml-[6px] mr-[17px] w-[13px] h-[14px]" viewBox="0 0 13 14" fill="none" stroke="#e8e8e8" stroke-width="1.100"><path d="M1.200 10.500l1.300-2V5.500a4 4 0 0 1 8 0v3l1.300 2zM5 11.500q1.500 2 3 0"/></svg>
    </div>
  </footer>
</div>
<script>
  const items = ["2D Animation","Audio","Effects","Event","Layout","Mesh","Miscellaneous","Physics 2D","Physics","Playables","Rendering","Scripts","Tilemap","UI Toolkit"];
  document.getElementById("menu").innerHTML = items.map(t =>
    `<div class="h-[16.670px] flex items-center justify-between"><span>${t}</span><svg class="w-[6px] h-2 text-[#a8a8a8]"><use href="#chev"/></svg></div>`).join("");
</script>
</body>
</html>
